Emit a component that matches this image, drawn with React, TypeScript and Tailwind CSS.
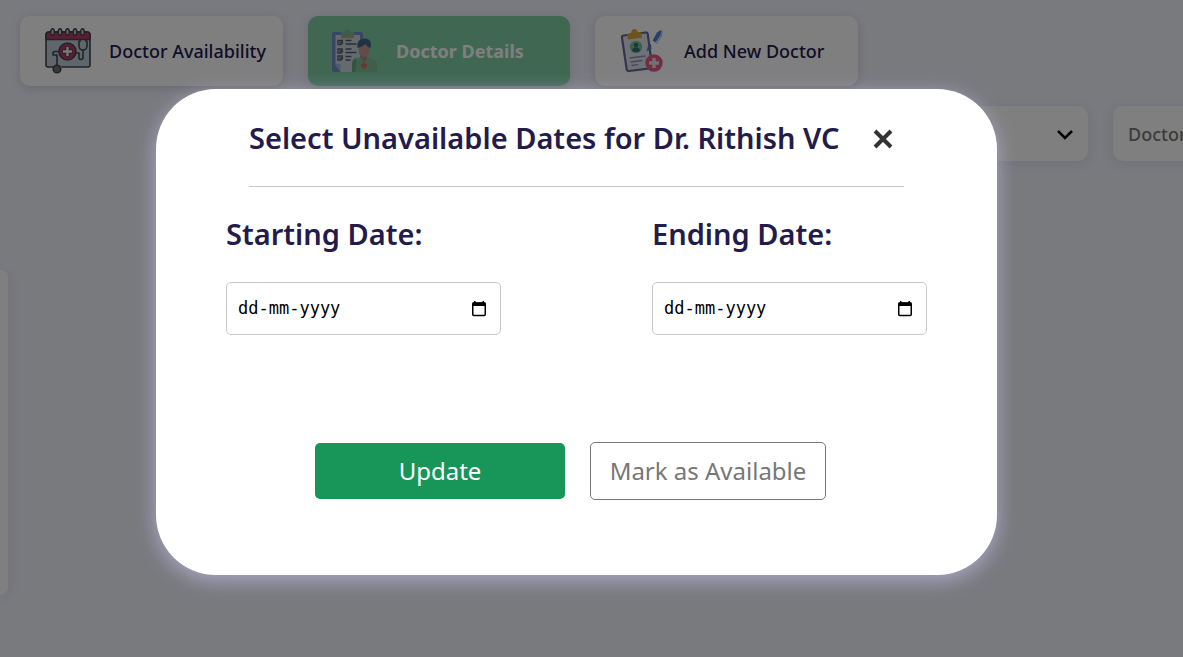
import React from "react";

function AvailabilityIcon() {
  return (
    <svg viewBox="0 0 46 46" className="size-[46px] shrink-0" fill="none" stroke="#41474f" strokeWidth="1.600" strokeLinecap="round" strokeLinejoin="round" aria-hidden="true">
      <path d="M9 39H3a2 2 0 0 1-2-2V7a3 3 0 0 1 3-3h38a3 3 0 0 1 3 3v30a2 2 0 0 1-2 2H17" fill="#bfccd8" />
      <path d="M1 11.500V7a3 3 0 0 1 3-3h38a3 3 0 0 1 3 3v4.500z" fill="#b83a60" />
      <g fill="#c8c8c8" strokeWidth="1.400">
        <ellipse cx="7.500" cy="4" rx="1.800" ry="3.300" />
        <ellipse cx="15" cy="4" rx="1.800" ry="3.300" />
        <ellipse cx="22.500" cy="4" rx="1.800" ry="3.300" />
        <ellipse cx="30" cy="4" rx="1.800" ry="3.300" />
        <ellipse cx="37.500" cy="4" rx="1.800" ry="3.300" />
      </g>
      <path d="M14 23.500h-4a2 2 0 0 0-2 2V27h4v10" />
      <circle cx="22.500" cy="23.500" r="8.500" fill="#b83a60" />
      <path d="M22.500 18.500v10M17.500 23.500h10" strokeWidth="4.500" strokeLinecap="butt" />
      <path d="M22.500 19v9M18 23.500h9" stroke="#f0f0f0" strokeWidth="2.400" strokeLinecap="butt" />
      <path d="M35.500 13H34v5a4 4 0 0 0 8 0v-5h-1.500M38 22v7.500a2 2 0 0 1-4 0V25h-3" />
      <circle cx="12" cy="41" r="3.800" fill="#66767c" />
    </svg>
  );
}

function DetailsIcon() {
  return (
    <svg viewBox="0 0 46 46" className="size-[46px] shrink-0" fill="none" aria-hidden="true">
      <rect x="0" y="4" width="31" height="40" rx="2" fill="#6c8cc8" />
      <path d="M3.500 7H28v37H8.500l-5-7z" fill="#cbd5da" />
      <path d="M3.500 36h5v8z" fill="#9fb4dc" />
      <path d="M9 4h4a2.500 2.500 0 0 1 5 0h4v5H9z" fill="#7cb893" />
      <path d="M10 8v1.500h11V8" stroke="#c09a8c" strokeWidth="1.500" />
      <g stroke="#4d5f70" strokeWidth="1.300">
        <path d="M11 12.500H6v4h3l2-2M11 21H6v4h3l2-2M11 28H6v4h3l2-2" />
        <path d="M7.500 14l1.300 1 2-2M7.500 22.500l1.300 1 2-2M7.500 29.500l1.300 1 2-2" />
        <path d="M13.500 12.500h6M13.500 16h11M13.500 21h6M13.500 24.500h11M13.500 28.500h6M13.500 32h5" />
      </g>
      <path d="M20 44V36c0-4 3-6 7-6.500h10c4.500.5 8 3 8 7V44z" fill="#82bd96" />
      <path d="M20 44V36c0-3 2-5 4-6 .5 4 .5 10-1 14z" fill="#6aa683" />
      <path d="M29 27h6v4l-3 3-3-3z" fill="#b0897b" />
      <ellipse cx="32" cy="22" rx="5.500" ry="7" fill="#c29c8d" />
      <path d="M25.500 20c-1-6 2-9.500 7-9.500 5.500 0 7.500 4 6 9.500-3-1-4-2.500-5-4-2 2-4.500 3-8 4z" fill="#426786" />
      <path d="M32 34.500v6M29 37.500h6" stroke="#cc7066" strokeWidth="3" />
    </svg>
  );
}

function AddDoctorIcon() {
  return (
    <svg viewBox="0 0 46 46" className="size-[46px] shrink-0" fill="none" aria-hidden="true">
      <path d="M3.500 7.500 25.500 4.500a2 2 0 0 1 2.300 1.800L32 38a2 2 0 0 1-1.700 2.300L9 43a2 2 0 0 1-2.300-1.700L2 9.800a2 2 0 0 1 1.500-2.300z" fill="#e2e4f0" stroke="#66689c" strokeWidth="2.200" />
      <path d="M7 6.500 11 5c.5-5 6-5 6.800-1l3.700.8.500 5L8 11.500z" fill="#dfa63e" />
      <circle cx="16" cy="19" r="6.200" fill="#74c09a" />
      <circle cx="16" cy="17" r="2.200" fill="#2f7462" />
      <path d="M12 22.500c.5-4.500 7.500-4.500 8 0-2 2-6 2-8 0z" fill="#2f7462" />
      <path d="m9.500 30 16-2M10.500 34l12-1.500M11.500 37.500l7-.8" stroke="#8c91b6" strokeWidth="1.300" />
      <path d="M41.500 1.500 37 4.500l-4.500 8 3 2 5-7z" fill="#5a7bd0" />
      <path d="m31 16-3 2-1.500 5.500 5-2.500z" fill="#5878c8" />
      <path d="m42 3-.5 5-5.500 8" stroke="#a9c0e4" strokeWidth="1.200" />
      <circle cx="34" cy="35" r="8.700" fill="#dc5f86" />
      <path d="M34 30v10M29 35h10" stroke="#ecdce3" strokeWidth="3.400" />
    </svg>
  );
}

const tabs = [
  { label: "Doctor Availability", icon: <AvailabilityIcon />, active: false },
  { label: "Doctor Details", icon: <DetailsIcon />, active: true },
  { label: "Add New Doctor", icon: <AddDoctorIcon />, active: false },
];

function DateField({ id, label }: { id: string; label: string }) {
  return (
    <div className="w-[275px]">
      <label htmlFor={id} className="block text-[29px] leading-9 font-semibold text-[#231b4b]">
        {label}
      </label>
      <div className="mt-[30px] flex h-[53px] items-center rounded-[5px] border border-[#c8c8c8] bg-white pr-3 pl-[11px]">
        <input
          id={id}
          type="text"
          placeholder="dd-mm-yyyy"
          className="min-w-0 flex-1 bg-transparent font-['DejaVu_Sans_Mono',monospace] text-[17px] text-black outline-none placeholder:text-black"
        />
        <button type="button" aria-label={"Choose " + label} className="shrink-0">
          <svg viewBox="0 0 18 18" className="size-[18px]" fill="none" aria-hidden="true">
            <rect x="2.750" y="3" width="12.500" height="12.500" rx="1" stroke="#000" strokeWidth="1.500" />
            <path d="M2.500 2.500h13v3.500h-13zM4 1h1.500v2.500H4zM12.500 1H14v2.500h-1.500z" fill="#000" />
          </svg>
        </button>
      </div>
    </div>
  );
}

export default function App() {
  return (
    <div className="relative min-h-screen overflow-hidden bg-[#f2f4fc] font-['Noto_Sans',sans-serif]">
      <nav className="flex gap-[25px] px-5 pt-4">
        {tabs.map((tab) => (
          <button
            key={tab.label}
            type="button"
            className={
              tab.active
                ? "flex h-[70px] w-[262px] shrink-0 items-center gap-[18px] rounded-[10px] bg-[#7fcfa5] pl-6 text-lg font-bold whitespace-nowrap text-white shadow-[0_2px_10px_#d8d6ea]"
                : "flex h-[70px] w-[263px] shrink-0 items-center gap-[18px] rounded-[10px] bg-white pl-[25px] text-lg font-medium whitespace-nowrap text-[#231b4b] shadow-[0_2px_10px_#d0cee2]"
            }
          >
            {tab.icon}
            {tab.label}
          </button>
        ))}
      </nav>

      <div className="mt-5 flex justify-end gap-[25px]">
        <div className="flex h-[55px] w-[263px] shrink-0 items-center rounded-[10px] bg-white pr-3 shadow-[0_2px_12px_#dedcf2]">
          <select aria-label="Department" className="h-full flex-1 appearance-none bg-transparent outline-none" />
          <svg viewBox="0 0 22 22" className="size-[22px]" fill="none" stroke="#000" strokeWidth="2.500" aria-hidden="true">
            <path d="m4 8 7 7 7-7" />
          </svg>
        </div>
        <input
          type="text"
          aria-label="Doctor"
          placeholder="Doctor"
          className="-mr-[193px] h-[55px] w-[263px] shrink-0 rounded-[10px] bg-white px-[15px] text-lg font-medium shadow-[0_2px_12px_#dedcf2] outline-none placeholder:text-[#777777]"
        />
      </div>

      <section className="mt-[109px] h-[325px] w-2 rounded-r-[10px] bg-white shadow-[0_2px_12px_#dedcf2]" />

      <div className="absolute inset-0 flex items-start justify-center bg-black/50 pt-[89px] pr-[30px]">
        <div
          role="dialog"
          aria-modal="true"
          aria-labelledby="dialog-title"
          className="w-full max-w-[841px] rounded-[60px] bg-white px-[70px] pt-7 pb-[75px] shadow-[0_5px_20px_#aaa8c8]"
        >
          <header className="mx-[23px] flex items-center justify-between border-b border-[#c8c8c8] pr-[10px] pb-7">
            <h2 id="dialog-title" className="text-[29px] leading-[41px] font-semibold whitespace-nowrap text-[#231b4b]">
              Select Unavailable Dates for Dr. Rithish VC
            </h2>
            <button type="button" aria-label="Close" className="shrink-0">
              <svg viewBox="0 0 22 22" className="size-[22px]" fill="none" stroke="#333" strokeWidth="4" aria-hidden="true">
                <path d="m3 4 16 16M19 4 3 20" />
              </svg>
            </button>
          </header>

          <div className="mt-[29px] flex justify-between">
            <DateField id="starting-date" label="Starting Date:" />
            <DateField id="ending-date" label="Ending Date:" />
          </div>

          <div className="mt-[107px] flex items-center justify-center gap-[25px] pr-3">
            <button type="button" className="h-14 w-[250px] rounded-[5px] bg-[#189558] text-2xl font-normal text-white">
              Update
            </button>
            <button type="button" className="h-[58px] w-[236px] rounded-[5px] border border-[#777777] bg-white text-2xl font-normal whitespace-nowrap text-[#777777]">
              Mark as Available
            </button>
          </div>
        </div>
      </div>
    </div>
  );
}
